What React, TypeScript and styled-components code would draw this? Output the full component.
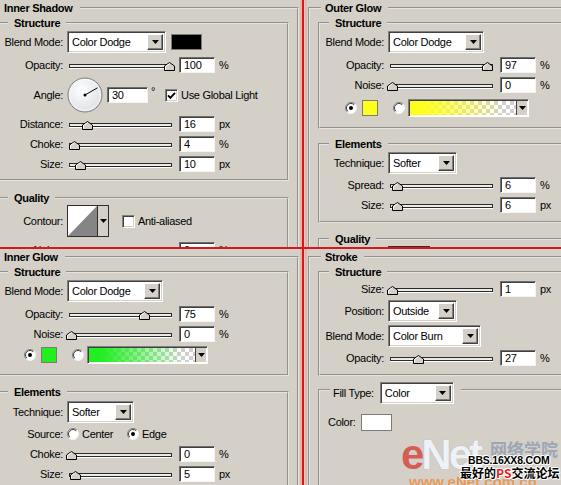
import React from 'react';
import styled, { createGlobalStyle } from 'styled-components';

const GlobalStyle = createGlobalStyle`
  html, body {
    margin: 0;
    padding: 0;
    background: #d4d0c8;
  }
  body {
    font-family: "Liberation Sans", Arial, sans-serif;
    font-size: 11px;
    color: #000;
  }
`;

/* ---------- page frame ---------- */

const Screen = styled.div`
  position: relative;
  width: 561px;
  height: 485px;
  overflow: hidden;
  display: grid;
  grid-template-columns: 302px 2px 257px;
  grid-template-rows: 247px 2px 236px;
  background: #d4d0c8;
  letter-spacing: -0.3px;
`;

const Quadrant = styled.div<{ $col: number; $row: number }>`
  grid-column: ${p => p.$col};
  grid-row: ${p => p.$row};
  overflow: hidden;
  min-width: 0;
`;

const VLine = styled.div`
  grid-column: 2;
  grid-row: 1 / 4;
  background: #d3191c;
  box-shadow: -2px 0 0 #ecb3ab, 3px 0 0 #ecb3ab;
  z-index: 1;
`;

const HLine = styled.div`
  grid-column: 1 / 4;
  grid-row: 2;
  background: #d3191c;
  z-index: 1;
`;

/* ---------- group boxes ---------- */

const Panel = styled.fieldset<{ $x: number }>`
  box-sizing: border-box;
  width: 312px;
  min-width: 0;
  margin: 1px 0 0 ${p => p.$x}px;
  padding: 0 8px;
  border: 2px groove #e6e4e0;
`;

const PanelTitle = styled.legend`
  margin-left: 3px;
  padding: 0 7px 0 4px;
  font-weight: bold;
  line-height: 14px;
`;

const Group = styled.fieldset<{ $mt: number; $pb: number }>`
  box-sizing: border-box;
  width: 292px;
  min-width: 0;
  margin: ${p => p.$mt}px 0 0;
  padding: 0 0 ${p => p.$pb}px;
  border: 2px groove #e6e4e0;
`;

const GroupTitle = styled.legend`
  margin-left: 9px;
  padding: 0 6px;
  font-weight: bold;
  line-height: 14px;
`;

const FillLegend = styled.legend`
  display: flex;
  align-items: center;
  margin-left: 10px;
  padding: 6px 7px 0 3px;
  line-height: 14px;
`;

const Row = styled.div<{ $h: number; $mt?: number }>`
  display: flex;
  align-items: center;
  height: ${p => p.$h}px;
  margin-top: ${p => p.$mt ?? 0}px;
  white-space: nowrap;
`;

const Label = styled.span`
  flex-shrink: 0;
  width: 64px;
  text-align: right;
`;

const PlainLabel = styled.span<{ $ml: number }>`
  flex-shrink: 0;
  margin-left: ${p => p.$ml}px;
`;

const Unit = styled.span`
  margin-left: 4px;
`;

const Degree = styled.span`
  flex-shrink: 0;
  width: 14px;
  margin-left: 3px;
  align-self: flex-start;
  margin-top: 9px;
`;

const TextAfter = styled.span`
  margin-left: 3px;
`;

/* ---------- controls ---------- */

const SelectFrame = styled.div<{ $w: number; $ml: number }>`
  box-sizing: border-box;
  flex-shrink: 0;
  width: ${p => p.$w}px;
  height: 22px;
  margin-left: ${p => p.$ml}px;
  display: flex;
  align-items: center;
  padding: 2px;
  background: #fff;
  border: 1px solid;
  border-color: #808080 #fff #fff #808080;
  box-shadow: inset 1px 1px 0 #404040, inset -1px -1px 0 #d4d0c8;
`;

const SelectText = styled.span`
  flex: 1;
  padding-left: 2px;
  overflow: hidden;
`;

const DropButton = styled.span`
  box-sizing: border-box;
  flex-shrink: 0;
  width: 16px;
  height: 16px;
  display: flex;
  align-items: center;
  justify-content: center;
  background: #d4d0c8;
  border: 1px solid;
  border-color: #fff #404040 #404040 #fff;
  box-shadow: inset -1px -1px 0 #808080;
`;

const Field = styled.div<{ $w: number; $ml: number }>`
  box-sizing: border-box;
  flex-shrink: 0;
  width: ${p => p.$w}px;
  height: 16px;
  margin-left: ${p => p.$ml}px;
  padding-left: 4px;
  line-height: 14px;
  background: #fff;
  border: 1px solid;
  border-color: #6e6e6e #f4f4f4 #f4f4f4 #6e6e6e;
  box-shadow: inset 1px 1px 0 #404040;
`;

const SliderBox = styled.div`
  position: relative;
  flex-shrink: 0;
  width: 110px;
  height: 14px;
  margin-left: 3px;
`;

const Track = styled.div`
  position: absolute;
  left: 3px;
  right: 4px;
  top: 6px;
  height: 4px;
  box-sizing: border-box;
  border: 1px solid #2a2a2a;
  background: #ecebe7;
  box-shadow: 0 1px 0 #fff;
`;

const Thumb = styled.svg<{ $pos: number }>`
  position: absolute;
  top: 4px;
  left: ${p => p.$pos}px;
`;

const Swatch = styled.span<{ $color: string; $w: number; $h: number; $ml: number }>`
  box-sizing: border-box;
  flex-shrink: 0;
  width: ${p => p.$w}px;
  height: ${p => p.$h}px;
  margin-left: ${p => p.$ml}px;
  background: ${p => p.$color};
  border: 1px solid #7c7b78;
`;

const CheckFrame = styled.span<{ $ml: number }>`
  box-sizing: border-box;
  flex-shrink: 0;
  width: 13px;
  height: 13px;
  margin-left: ${p => p.$ml}px;
  display: flex;
  align-items: center;
  justify-content: center;
  background: #fff;
  border: 1px solid;
  border-color: #808080 #fff #fff #808080;
  box-shadow: inset 1px 1px 0 #404040, inset -1px -1px 0 #d4d0c8;
`;

const RadioMark = styled.svg<{ $ml: number }>`
  flex-shrink: 0;
  margin-left: ${p => p.$ml}px;
`;

const RadioChoice = styled.span<{ $w?: number; $ml: number }>`
  display: inline-flex;
  align-items: center;
  flex-shrink: 0;
  width: ${p => (p.$w ? `${p.$w}px` : 'auto')};
  margin-left: ${p => p.$ml}px;
`;

const DialMark = styled.svg`
  flex-shrink: 0;
  margin-left: 4px;
`;

const GradientFrame = styled.div`
  box-sizing: border-box;
  flex-shrink: 0;
  width: 121px;
  height: 18px;
  margin-left: 3px;
  display: flex;
  padding: 1px;
  background: #fff;
  border: 1px solid;
  border-color: #808080 #fff #fff #808080;
  box-shadow: inset 1px 1px 0 #404040;
`;

const GradientFill = styled.span<{ $color: string }>`
  flex: 1;
  background:
    linear-gradient(to right, ${p => p.$color} 0%, ${p => p.$color} 12%, rgba(255, 255, 255, 0) 88%),
    repeating-conic-gradient(#cfcfcf 0 25%, #fff 0 50%) 0 0 / 8px 8px;
`;

const GradientDrop = styled.span`
  flex-shrink: 0;
  width: 10px;
  display: flex;
  align-items: center;
  justify-content: center;
  background: #d4d0c8;
  border-left: 1px solid #404040;
`;

const ContourFrame = styled.div`
  box-sizing: border-box;
  flex-shrink: 0;
  width: 42px;
  height: 32px;
  margin-left: 4px;
  display: flex;
  border: 1px solid #2e2e2e;
  background: #d4d0c8;
`;

const ContourDrop = styled.span`
  flex: 1;
  display: flex;
  align-items: center;
  justify-content: center;
  border-left: 1px solid #2e2e2e;
`;

/* ---------- watermark ---------- */

const Watermark = styled.div`
  position: absolute;
  left: 398px;
  top: 432px;
  width: 163px;
  height: 53px;
  z-index: 2;
  pointer-events: none;
  letter-spacing: 0;
  white-space: nowrap;
`;

const LogoWord = styled.div`
  position: absolute;
  left: 3px;
  top: 2px;
  font: bold 42px/42px "Liberation Sans", Arial, sans-serif;
  letter-spacing: -3px;
`;

const LogoE = styled.span`
  color: rgba(214, 72, 62, 0.85);
`;

const LogoNet = styled.span`
  color: #eef1f6;
  text-shadow: 0 0 1px #a0a6b2;
`;

const LogoCn = styled.div`
  position: absolute;
  left: 92px;
  top: 8px;
  font: bold 17px/17px "Noto Sans CJK SC", sans-serif;
  color: #9ea6b6;
`;

const LogoUrl = styled.div`
  position: absolute;
  left: 11px;
  top: 42px;
  font: bold 15px/15px "Liberation Sans", Arial, sans-serif;
  color: rgba(236, 140, 60, 0.8);
`;

const outline = '1px 0 0 #fff, -1px 0 0 #fff, 0 1px 0 #fff, 0 -1px 0 #fff, 1px 1px 0 #fff, -1px -1px 0 #fff';

const BbsLine = styled.div`
  position: absolute;
  left: 70px;
  top: 23px;
  font: bold 10.5px/11px "Liberation Sans", Arial, sans-serif;
  letter-spacing: -0.2px;
  color: #000;
  text-shadow: ${outline};
`;

const SloganLine = styled.div`
  position: absolute;
  left: 62px;
  top: 35px;
  font: bold 12px/12px "Noto Sans CJK SC", sans-serif;
  color: #000;
  text-shadow: ${outline};
`;

const SloganRed = styled.span`
  color: #e01e1e;
`;

/* ---------- small drawings ---------- */

const DownArrow = () => (
  <svg width="7" height="4" viewBox="0 0 7 4">
    <path d="M0 0h7L3.5 4z" fill="#000" />
  </svg>
);

const Select = ({ text, w, ml = 4 }: { text: string; w: number; ml?: number }) => (
  <SelectFrame $w={w} $ml={ml}>
    <SelectText>{text}</SelectText>
    <DropButton>
      <DownArrow />
    </DropButton>
  </SelectFrame>
);

const Slider = ({ pos }: { pos: number }) => (
  <SliderBox>
    <Track />
    <Thumb $pos={pos} width="11" height="9" viewBox="0 0 11 9">
      <polygon points="0.5,8.5 0.5,4 5.5,0.5 10.5,4 10.5,8.5" fill="#d4d0c8" stroke="#000" />
      <polyline points="1.5,7.5 1.5,4.5 5.5,1.7" fill="none" stroke="#fff" />
    </Thumb>
  </SliderBox>
);

const SliderRow = ({
  label,
  h,
  pos,
  value,
  unit,
  mt,
}: {
  label: string;
  h: number;
  pos: number;
  value: string;
  unit: string;
  mt?: number;
}) => (
  <Row $h={h} $mt={mt}>
    <Label>{label}</Label>
    <Slider pos={pos} />
    <Field $w={36} $ml={3}>{value}</Field>
    <Unit>{unit}</Unit>
  </Row>
);

const Checkbox = ({ checked, ml }: { checked?: boolean; ml: number }) => (
  <CheckFrame $ml={ml}>
    {checked && (
      <svg width="9" height="9" viewBox="0 0 9 9">
        <polyline points="1,4.3 3.4,6.8 8,1.8" fill="none" stroke="#000" strokeWidth="1.9" />
      </svg>
    )}
  </CheckFrame>
);

const Radio = ({ checked, ml }: { checked?: boolean; ml: number }) => (
  <RadioMark $ml={ml} width="12" height="12" viewBox="0 0 12 12">
    <circle cx="6" cy="6" r="5.5" fill="#fff" />
    <path d="M2.1 9.9A5.5 5.5 0 0 1 9.9 2.1" fill="none" stroke="#808080" />
    <path d="M2.8 9.2A4.5 4.5 0 0 1 9.2 2.8" fill="none" stroke="#404040" />
    <path d="M9.9 2.1A5.5 5.5 0 0 1 2.1 9.9" fill="none" stroke="#f4f4f4" />
    {checked && <circle cx="6" cy="6" r="2" fill="#000" />}
  </RadioMark>
);

const Dial = () => (
  <DialMark width="36" height="36" viewBox="0 0 36 36">
    <defs>
      <radialGradient id="dialFace" cx="0.4" cy="0.35" r="0.7">
        <stop offset="0" stopColor="#ffffff" />
        <stop offset="1" stopColor="#dcdfe4" />
      </radialGradient>
    </defs>
    <circle cx="18" cy="18" r="17" fill="url(#dialFace)" stroke="#7a7c80" />
    <circle cx="18" cy="18" r="15.5" fill="none" stroke="#fff" strokeOpacity="0.7" />
    <line x1="18" y1="18" x2="30.5" y2="10.8" stroke="#000" />
    <circle cx="18" cy="18" r="1.5" fill="#000" />
  </DialMark>
);

const Gradient = ({ color }: { color: string }) => (
  <GradientFrame>
    <GradientFill $color={color} />
    <GradientDrop>
      <DownArrow />
    </GradientDrop>
  </GradientFrame>
);

const ColorRow = ({ h, color }: { h: number; color: string }) => (
  <Row $h={h}>
    <Radio checked ml={25} />
    <Swatch $color={color} $w={16} $h={16} $ml={5} />
    <Radio ml={15} />
    <Gradient color={color} />
  </Row>
);

const Contour = () => (
  <ContourFrame>
    <svg width="29" height="30" viewBox="0 0 29 30">
      <rect width="29" height="30" fill="#fff" />
      <polygon points="0,30 29,0 29,30" fill="#858585" />
    </svg>
    <ContourDrop>
      <DownArrow />
    </ContourDrop>
  </ContourFrame>
);

/* ---------- quadrants ---------- */

const InnerShadow = () => (
  <Panel $x={-13}>
    <PanelTitle>Inner Shadow</PanelTitle>
    <Group $mt={1} $pb={6}>
      <GroupTitle>Structure</GroupTitle>
      <Row $h={24}>
        <Label>Blend Mode:</Label>
        <Select text="Color Dodge" w={99} />
        <Swatch $color="#000" $w={31} $h={16} $ml={5} />
      </Row>
      <SliderRow label="Opacity:" h={22} pos={98} value="100" unit="%" />
      <Row $h={38}>
        <Label>Angle:</Label>
        <Dial />
        <Field $w={41} $ml={4}>30</Field>
        <Degree>°</Degree>
        <Checkbox checked ml={0} />
        <TextAfter>Use Global Light</TextAfter>
      </Row>
      <SliderRow label="Distance:" h={20} pos={16} value="16" unit="px" />
      <SliderRow label="Choke:" h={20} pos={3} value="4" unit="%" />
      <SliderRow label="Size:" h={19} pos={9} value="10" unit="px" />
    </Group>
    <Group $mt={10} $pb={40}>
      <GroupTitle>Quality</GroupTitle>
      <Row $h={32}>
        <Label>Contour:</Label>
        <Contour />
        <Checkbox ml={13} />
        <TextAfter>Anti-aliased</TextAfter>
      </Row>
      <SliderRow label="Noise:" h={19} mt={3} pos={0} value="0" unit="%" />
    </Group>
  </Panel>
);

const OuterGlow = () => (
  <Panel $x={4}>
    <PanelTitle>Outer Glow</PanelTitle>
    <Group $mt={1} $pb={6}>
      <GroupTitle>Structure</GroupTitle>
      <Row $h={24}>
        <Label>Blend Mode:</Label>
        <Select text="Color Dodge" w={96} />
      </Row>
      <SliderRow label="Opacity:" h={21} pos={95} value="97" unit="%" />
      <SliderRow label="Noise:" h={20} pos={0} value="0" unit="%" />
      <ColorRow h={26} color="#ffff1e" />
    </Group>
    <Group $mt={8} $pb={6}>
      <GroupTitle>Elements</GroupTitle>
      <Row $h={24}>
        <Label>Technique:</Label>
        <Select text="Softer" w={69} />
      </Row>
      <SliderRow label="Spread:" h={20} pos={5} value="6" unit="%" />
      <SliderRow label="Size:" h={20} pos={5} value="6" unit="px" />
    </Group>
    <Group $mt={9} $pb={40}>
      <GroupTitle>Quality</GroupTitle>
      <Row $h={32}>
        <Label>Contour:</Label>
        <Contour />
      </Row>
    </Group>
  </Panel>
);

const InnerGlow = () => (
  <Panel $x={-13}>
    <PanelTitle>Inner Glow</PanelTitle>
    <Group $mt={1} $pb={8}>
      <GroupTitle>Structure</GroupTitle>
      <Row $h={24}>
        <Label>Blend Mode:</Label>
        <Select text="Color Dodge" w={96} />
      </Row>
      <SliderRow label="Opacity:" h={21} pos={73} value="75" unit="%" />
      <SliderRow label="Noise:" h={20} pos={0} value="0" unit="%" />
      <ColorRow h={22} color="#22ee22" />
    </Group>
    <Group $mt={9} $pb={40}>
      <GroupTitle>Elements</GroupTitle>
      <Row $h={25}>
        <Label>Technique:</Label>
        <Select text="Softer" w={67} />
      </Row>
      <Row $h={20}>
        <Label>Source:</Label>
        <RadioChoice $w={60} $ml={4}>
          <Radio ml={0} />
          <TextAfter>Center</TextAfter>
        </RadioChoice>
        <RadioChoice $ml={0}>
          <Radio checked ml={0} />
          <TextAfter>Edge</TextAfter>
        </RadioChoice>
      </Row>
      <SliderRow label="Choke:" h={20} pos={0} value="0" unit="%" />
      <SliderRow label="Size:" h={20} pos={4} value="5" unit="px" />
    </Group>
  </Panel>
);

const Stroke = () => (
  <Panel $x={4}>
    <PanelTitle>Stroke</PanelTitle>
    <Group $mt={1} $pb={6}>
      <GroupTitle>Structure</GroupTitle>
      <SliderRow label="Size:" h={19} pos={0} value="1" unit="px" />
      <Row $h={25}>
        <Label>Position:</Label>
        <Select text="Outside" w={69} />
      </Row>
      <Row $h={25}>
        <Label>Blend Mode:</Label>
        <Select text="Color Burn" w={93} />
      </Row>
      <SliderRow label="Opacity:" h={20} pos={26} value="27" unit="%" />
    </Group>
    <Group $mt={0} $pb={100}>
      <FillLegend>
        Fill Type:
        <Select text="Color" w={74} ml={6} />
      </FillLegend>
      <Row $h={36}>
        <PlainLabel $ml={8}>Color:</PlainLabel>
        <Swatch $color="#fff" $w={31} $h={17} $ml={5} />
      </Row>
    </Group>
  </Panel>
);

const App: React.FC = () => (
  <>
    <GlobalStyle />
    <Screen>
      <Quadrant $col={1} $row={1}>
        <InnerShadow />
      </Quadrant>
      <Quadrant $col={3} $row={1}>
        <OuterGlow />
      </Quadrant>
      <Quadrant $col={1} $row={3}>
        <InnerGlow />
      </Quadrant>
      <Quadrant $col={3} $row={3}>
        <Stroke />
      </Quadrant>
      <VLine />
      <HLine />
      <Watermark>
        <LogoWord>
          <LogoE>e</LogoE>
          <LogoNet>Net</LogoNet>
        </LogoWord>
        <LogoCn>网络学院</LogoCn>
        <LogoUrl>www.eNet.com.cn</LogoUrl>
        <BbsLine>BBS.16XX8.COM</BbsLine>
        <SloganLine>
          最好的<SloganRed>PS</SloganRed>交流论坛
        </SloganLine>
      </Watermark>
    </Screen>
  </>
);

export default App;
